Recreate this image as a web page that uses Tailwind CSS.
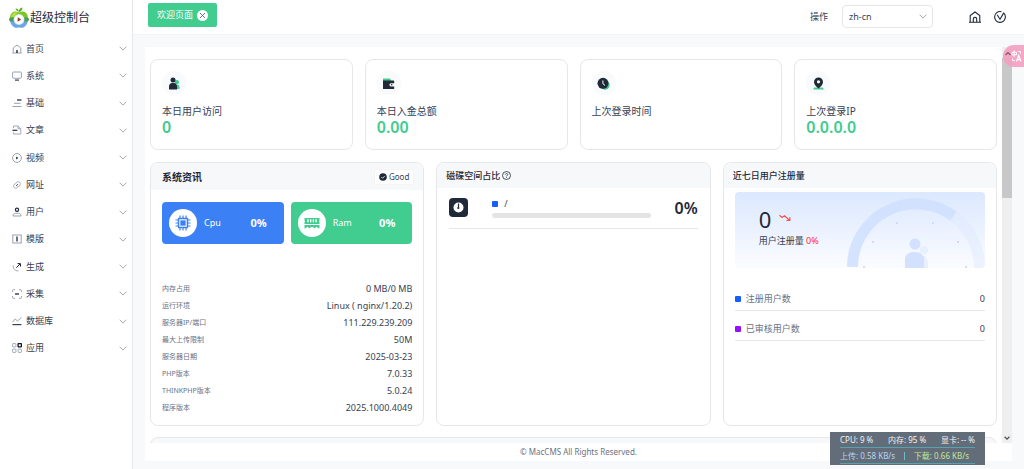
<!DOCTYPE html>
<html lang="zh-CN">
<head>
    <meta charset="UTF-8">
    <meta name="viewport" content="width=device-width, initial-scale=1.0">
    <title>超级控制台</title>
    <script src="https://cdn.jsdelivr.net/npm/@tailwindcss/browser@4"></script>
</head>
<body class="bg-[#f7f9fb] font-['Noto_Sans','Noto_Sans_CJK_SC',sans-serif] text-[9px] leading-[14px] text-gray-700 flex h-screen overflow-hidden">

    <!-- Chevron shared by the menu rows -->
    <svg class="hidden">
        <symbol id="chevron" viewBox="0 0 8 5"><path d="M.6.7 4 4.1 7.4.7" fill="none" stroke="currentColor" stroke-width=".9"/></symbol>
    </svg>

    <!-- Sidebar -->
    <aside class="w-[133px] shrink-0 bg-white border-r border-gray-200">
        <a href="#" class="flex items-center gap-px h-[35px] pl-[9px] text-[12px] leading-[18px] text-gray-800">
            <svg class="w-5 h-[21px]" viewBox="0 0 20 21">
                <path d="M10 5.500C5.500 3 1 5.500 1 11.500h18c0-6-4.500-8.500-9-6z" fill="#7cc722"/>
                <path d="M1 13c.3 4.500 3.500 7.800 6.500 7.800 1.300 0 1.700-.4 2.500-.4s1.200.4 2.500.4c3 0 6.200-3.300 6.500-7.800z" fill="#6ba6e4"/>
                <path d="M2 10C2.500 6.500 5 4.800 8.500 5.500L5 10z" fill="#b4e045"/>
                <path d="M10 5.200C9.500 2.500 11 .8 13.500.5 13.500 3 12 4.600 10 5.200zM10 4.700C8.500 4.400 6.500 3.200 6.600 1.500 8.500 1.600 9.800 3 10 4.700z" fill="#55b51f"/>
                <rect x="0" y="10.500" width="20" height="4" rx="2" fill="#4f9a62"/>
                <circle cx="10" cy="12.500" r="5.400" fill="#d6ebf2"/>
                <circle cx="10" cy="12.500" r="4.500" fill="#fff"/>
                <path d="M8.700 10.300v4.400l3.500-2.200z" fill="#8d3b33"/>
            </svg>
            超级控制台
        </a>
        <nav class="grid grid-rows-12 h-[327px] pl-3 pr-[5px] text-gray-700">
            <a href="#" class="flex items-center gap-1">
                <svg class="w-[10px] h-[10px] text-gray-400" viewBox="0 0 10 10" fill="none" stroke="currentColor"><path d="M1.200 9V4L5 1l3.800 3v5M.5 9h9"/><path d="M5 9V6" stroke="#1f2937" stroke-width="1.400"/></svg>
                <span class="flex-1">首页</span><svg class="w-2 h-[5px] text-gray-400"><use href="#chevron"/></svg>
            </a>
            <a href="#" class="flex items-center gap-1">
                <svg class="w-[10px] h-[10px] text-gray-400" viewBox="0 0 10 10" fill="none" stroke="currentColor"><rect x=".6" y="1" width="8.800" height="6.300" rx="1"/><path d="M3 9.100h4" stroke="#374151" stroke-width="1.200"/></svg>
                <span class="flex-1">系统</span><svg class="w-2 h-[5px] text-gray-400"><use href="#chevron"/></svg>
            </a>
            <a href="#" class="flex items-center gap-1">
                <svg class="w-[10px] h-[10px] text-gray-400" viewBox="0 0 10 10" fill="none" stroke="currentColor"><path d="M2 5.300h6.500M.5 8.500h9"/><path d="M5 2h4.500" stroke="#374151" stroke-width="1.400"/></svg>
                <span class="flex-1">基础</span><svg class="w-2 h-[5px] text-gray-400"><use href="#chevron"/></svg>
            </a>
            <a href="#" class="flex items-center gap-1">
                <svg class="w-[10px] h-[10px] text-gray-400" viewBox="0 0 10 10" fill="none" stroke="currentColor" stroke-width=".9"><path d="M1.500 3V1H6l2.800 2.700V9H1.500V7.300M6 1v2.700h2.800"/><path d="M.5 5.300h4.800" stroke="#1f2937" stroke-width="1.200"/></svg>
                <span class="flex-1">文章</span><svg class="w-2 h-[5px] text-gray-400"><use href="#chevron"/></svg>
            </a>
            <a href="#" class="flex items-center gap-1">
                <svg class="w-[10px] h-[10px] text-gray-400" viewBox="0 0 10 10" fill="none" stroke="currentColor"><circle cx="5" cy="5" r="4.400"/><path d="M4.200 3.600v2.800L6.400 5z" fill="#1f2937" stroke="none"/></svg>
                <span class="flex-1">视频</span><svg class="w-2 h-[5px] text-gray-400"><use href="#chevron"/></svg>
            </a>
            <a href="#" class="flex items-center gap-1">
                <svg class="w-[10px] h-[10px] text-gray-400" viewBox="0 0 10 10" fill="none" stroke="currentColor" stroke-width=".9"><path d="M4 3.200C4.500 1.800 6 1.300 7.200 2c1.400.8 1.500 2.600.5 3.700-.6.600-1.300.9-2 .8M6 6.500C5.600 8 4 8.700 2.700 8 1.400 7.200 1.300 5.400 2.300 4.300c.6-.5 1.200-.7 1.900-.6"/><path d="m4.200 5.900 1.600-1.700" stroke="#1f2937"/></svg>
                <span class="flex-1">网址</span><svg class="w-2 h-[5px] text-gray-400"><use href="#chevron"/></svg>
            </a>
            <a href="#" class="flex items-center gap-1">
                <svg class="w-[10px] h-[10px] text-gray-400" viewBox="0 0 10 10" fill="none" stroke="currentColor"><circle cx="5" cy="2.700" r="1.600" stroke="#1f2937" stroke-width="1.200"/><path d="M1 9c0-2 1.200-2.700 2.500-2.700h3C7.800 6.300 9 7 9 9z"/></svg>
                <span class="flex-1">用户</span><svg class="w-2 h-[5px] text-gray-400"><use href="#chevron"/></svg>
            </a>
            <a href="#" class="flex items-center gap-1">
                <svg class="w-[10px] h-[10px] text-gray-400" viewBox="0 0 10 10" fill="none" stroke="currentColor"><rect x=".8" y="1" width="8.400" height="8"/><path d="M5 2.500v5" stroke="#1f2937" stroke-width="1.300"/></svg>
                <span class="flex-1">模版</span><svg class="w-2 h-[5px] text-gray-400"><use href="#chevron"/></svg>
            </a>
            <a href="#" class="flex items-center gap-1">
                <svg class="w-[10px] h-[10px] text-gray-400" viewBox="0 0 10 10" fill="none" stroke="currentColor"><path d="M1.200 3.500C.8 6.800 3.200 9.200 6.500 8.800"/><path d="M4.300 5.700 8 2M5.500 1.600h3v3" stroke="#1f2937"/></svg>
                <span class="flex-1">生成</span><svg class="w-2 h-[5px] text-gray-400"><use href="#chevron"/></svg>
            </a>
            <a href="#" class="flex items-center gap-1">
                <svg class="w-[10px] h-[10px] text-gray-400" viewBox="0 0 10 10" fill="none" stroke="currentColor"><path d="M.6 3V1.500Q.6.700 1.500.7H3M7 .7h1.500q.9 0 .9.800V3M9.400 7v1.500q0 .8-.9.800H7M3 9.300H1.500q-.9 0-.9-.8V7"/><path d="M3 5h4" stroke="#1f2937" stroke-width="1.300"/></svg>
                <span class="flex-1">采集</span><svg class="w-2 h-[5px] text-gray-400"><use href="#chevron"/></svg>
            </a>
            <a href="#" class="flex items-center gap-1">
                <svg class="w-[10px] h-[10px] text-gray-400" viewBox="0 0 10 10" fill="none" stroke="currentColor"><path d="m.6 6 2.600-3 2.300 2L9.400 1.500"/><path d="M.5 8.600h9" stroke="#374151" stroke-width="1.200"/></svg>
                <span class="flex-1">数据库</span><svg class="w-2 h-[5px] text-gray-400"><use href="#chevron"/></svg>
            </a>
            <a href="#" class="flex items-center gap-1">
                <svg class="w-[10px] h-[10px] text-gray-400" viewBox="0 0 10 10" fill="none" stroke="currentColor" stroke-width=".9"><rect x=".6" y=".6" width="3.300" height="3.300" rx=".5"/><rect x=".6" y="6.100" width="3.300" height="3.300" rx=".5"/><rect x="6.100" y="6.100" width="3.300" height="3.300" rx=".5"/><rect x="6.100" y=".6" width="3.300" height="3.300" rx=".5" stroke="#111827" stroke-width="1.300"/></svg>
                <span class="flex-1">应用</span><svg class="w-2 h-[5px] text-gray-400"><use href="#chevron"/></svg>
            </a>
        </nav>
    </aside>

    <div class="flex-1 min-w-0 flex flex-col">
        <!-- Top bar -->
        <header class="flex items-start justify-between h-[35px] shrink-0 bg-white border-b border-gray-100 pl-[15px] pr-[18px]">
            <div class="flex items-center gap-1 h-6 mt-[3px] px-[9px] rounded-xs bg-[#41cc90] text-white">
                <span>欢迎页面</span>
                <button aria-label="关闭" class="w-[11px] h-[11px] rounded-full bg-white flex items-center justify-center">
                    <svg class="w-[7px] h-[7px]" viewBox="0 0 7 7"><path d="m1 1 5 5M6 1 1 6" stroke="#4b5563" stroke-width=".8"/></svg>
                </button>
            </div>
            <div class="flex items-center h-[23px] mt-[5px]">
                <label for="lang" class="mr-[14px]">操作</label>
                <div class="relative mr-9">
                    <select id="lang" class="appearance-none w-[91px] h-[23px] pl-[6px] border border-gray-200 rounded-sm bg-white">
                        <option>zh-cn</option>
                    </select>
                    <svg class="absolute right-[6px] top-[9px] w-2 h-[5px] text-gray-400 pointer-events-none"><use href="#chevron"/></svg>
                </div>
                <a href="#" aria-label="首页" class="mr-[13px]">
                    <svg class="w-3 h-3" viewBox="0 0 12 12" fill="none" stroke="#1f2937" stroke-width="1.100"><path d="M1.200 11V4.500L6 1l4.800 3.500V11M0 11.200h12M4.300 11V8c0-2.200 3.400-2.200 3.400 0v3"/></svg>
                </a>
                <button aria-label="版本">
                    <svg class="w-3 h-3" viewBox="0 0 12 12" fill="none" stroke="#1f2937" stroke-width="1.100"><path d="M7.500.8C4-.2.6 2.400.6 6c0 3 2.400 5.400 5.400 5.400s5.400-2.400 5.400-5.400c0-1.500-.6-2.800-1.500-3.800"/><path d="M3.200 3.800 6 8.300 9.900 1.600"/></svg>
                </button>
            </div>
        </header>

        <main class="flex-1 min-h-0 flex mt-3 mx-3">
            <div class="flex-1 min-w-0 bg-white pt-3 px-[5px] overflow-hidden">
                <!-- Stat cards -->
                <div class="grid grid-cols-4 gap-3">
                    <section class="h-[91px] border border-gray-200 rounded-lg p-[11px]">
                        <div class="w-6 h-6 rounded-full bg-gray-50 flex items-center justify-center">
                            <svg class="w-[13px] h-[13px]" viewBox="0 0 13 13"><g fill="#41cc90"><circle cx="8.800" cy="5.200" r="2.200"/><path d="M7 12V8.500C9 7 11.500 8 11.500 10v2z"/></g><g fill="#1f2937"><circle cx="5" cy="2.900" r="2.500"/><path d="M1 12.500V9.300C1 7.400 2.400 6 4.200 6h1.500C7.500 6 9 7.400 9 9.300v3.200z"/></g></svg>
                        </div>
                        <h2 class="mt-[9px] text-[10px]">本日用户访问</h2>
                        <p class="text-[16px] leading-[18px] font-semibold text-[#41cc90]">0</p>
                    </section>
                    <section class="h-[91px] border border-gray-200 rounded-lg p-[11px]">
                        <div class="w-6 h-6 rounded-full bg-gray-50 flex items-center justify-center">
                            <svg class="w-[13px] h-[13px]" viewBox="0 0 13 13"><path d="M1 1.500h7l1.500 3H1z" fill="#41cc90"/><path d="M1 3.500h10.500q.7 0 .7.700v2H9a1.500 1.500 0 0 0 0 3.200h3.200v2q0 .6-.7.600H1.700q-.7 0-.7-.6z" fill="#1f2937"/><circle cx="9.700" cy="7.800" r=".8" fill="#1f2937"/></svg>
                        </div>
                        <h2 class="mt-[9px] text-[10px]">本日入金总额</h2>
                        <p class="text-[16px] leading-[18px] font-semibold text-[#41cc90]">0.00</p>
                    </section>
                    <section class="h-[91px] border border-gray-200 rounded-lg p-[11px]">
                        <div class="w-6 h-6 rounded-full bg-gray-50 flex items-center justify-center">
                            <svg class="w-[13px] h-[13px]" viewBox="0 0 13 13"><circle cx="8" cy="8" r="4.700" fill="#41cc90"/><circle cx="6" cy="6.300" r="5.500" fill="#1f2937"/><path d="M5.900 3.500v3.200l2.100 1.700" fill="none" stroke="#fff"/></svg>
                        </div>
                        <h2 class="mt-[9px] text-[10px]">上次登录时间</h2>
                    </section>
                    <section class="h-[91px] border border-gray-200 rounded-lg p-[11px]">
                        <div class="w-6 h-6 rounded-full bg-gray-50 flex items-center justify-center">
                            <svg class="w-[13px] h-[13px]" viewBox="0 0 13 13"><path d="M2.300 10.500h8.400l1.300 2H1z" fill="#41cc90"/><path d="M6.500 11.500C3.500 9 2 7.200 2 5a4.500 4.500 0 0 1 9 0c0 2.200-1.500 4-4.500 6.500z" fill="#1f2937"/><circle cx="6.500" cy="4.800" r="1.600" fill="#fff"/></svg>
                        </div>
                        <h2 class="mt-[9px] text-[10px]">上次登录IP</h2>
                        <p class="text-[16px] leading-[18px] font-semibold text-[#41cc90]">0.0.0.0</p>
                    </section>
                </div>

                <div class="grid grid-cols-3 gap-3 mt-3">
                    <!-- System info -->
                    <section class="h-[264px] border border-gray-200 rounded-lg overflow-hidden">
                        <div class="flex items-center justify-between h-[27px] pl-[11px] pr-[9px] bg-[#f7f8fa]">
                            <h2 class="text-[10px] font-bold text-gray-800">系统资讯</h2>
                            <span class="flex items-center gap-[2px] h-4 px-1 text-[8px] bg-white border border-gray-100 rounded-xs">
                                <svg class="w-2 h-2" viewBox="0 0 8 8"><circle cx="4" cy="4" r="3.800" fill="#1f2937"/><path d="m2.300 4 1.300 1.300 2.200-2.400" fill="none" stroke="#fff" stroke-width=".8"/></svg>
                                Good
                            </span>
                        </div>
                        <div class="px-[11px] pt-3">
                            <div class="grid grid-cols-2 gap-[7px] text-white">
                                <div class="flex items-center h-[42px] pl-[7px] pr-[17px] rounded-sm bg-[#3c80f6]">
                                    <div class="w-7 h-7 rounded-full bg-white flex items-center justify-center">
                                        <svg class="w-4 h-4" viewBox="0 0 16 16" fill="none" stroke="#3c80f6"><path d="M5 .5v15M8 .5v15M11 .5v15M.5 5h15M.5 8h15M.5 11h15" stroke-width="1.200"/><rect x="2.800" y="2.800" width="10.400" height="10.400" rx="1" fill="#3c80f6" stroke="none"/><rect x="4.800" y="4.800" width="6.400" height="6.400" stroke="#fff" stroke-width="1.100"/></svg>
                                    </div>
                                    <span class="ml-[7px] flex-1">Cpu</span>
                                    <strong class="text-[11px]">0%</strong>
                                </div>
                                <div class="flex items-center h-[42px] pl-[7px] pr-[17px] rounded-sm bg-[#41cc90]">
                                    <div class="w-7 h-7 rounded-full bg-white flex items-center justify-center">
                                        <svg class="w-4 h-4" viewBox="0 0 16 16"><path d="M.5 3h15v2.500q-1.300.8 0 1.600V9H.5V7q1.300-.8 0-1.500zM.5 10h15v3.200h-2V12h-2v1.200h-2V12h-3v1.200h-2V12h-2v1.200h-2z" fill="#41cc90"/><path d="M4 4.200v3M6.700 4.200v3M9.400 4.200v3M12.100 4.200v3" stroke="#fff" stroke-width="1.400"/></svg>
                                    </div>
                                    <span class="ml-[7px] flex-1">Ram</span>
                                    <strong class="text-[11px]">0%</strong>
                                </div>
                            </div>
                            <dl class="mt-9 leading-[17px]">
                                <div class="flex justify-between"><dt class="text-[7px] text-gray-500">内存占用</dt><dd>0 MB/0 MB</dd></div>
                                <div class="flex justify-between"><dt class="text-[7px] text-gray-500">运行环境</dt><dd>Linux ( nginx/1.20.2)</dd></div>
                                <div class="flex justify-between"><dt class="text-[7px] text-gray-500">服务器IP/端口</dt><dd>111.229.239.209</dd></div>
                                <div class="flex justify-between"><dt class="text-[7px] text-gray-500">最大上传限制</dt><dd>50M</dd></div>
                                <div class="flex justify-between"><dt class="text-[7px] text-gray-500">服务器日期</dt><dd>2025-03-23</dd></div>
                                <div class="flex justify-between"><dt class="text-[7px] text-gray-500">PHP版本</dt><dd>7.0.33</dd></div>
                                <div class="flex justify-between"><dt class="text-[7px] text-gray-500">THINKPHP版本</dt><dd>5.0.24</dd></div>
                                <div class="flex justify-between"><dt class="text-[7px] text-gray-500">程序版本</dt><dd>2025.1000.4049</dd></div>
                            </dl>
                        </div>
                    </section>

                    <!-- Disk usage -->
                    <section class="h-[264px] border border-gray-200 rounded-lg overflow-hidden">
                        <div class="flex items-center gap-[2px] h-[25px] px-[9px] bg-[#f7f8fa]">
                            <h2 class="font-medium text-gray-800">磁碟空间占比</h2>
                            <svg class="w-[9px] h-[9px]" viewBox="0 0 9 9" fill="none" stroke="#1f2937" stroke-width=".8"><circle cx="4.500" cy="4.500" r="4"/><path d="M3.300 3.700c0-1.600 2.500-1.500 2.400 0C5.700 4.500 4.500 4.500 4.500 5.400M4.500 6.200v.8"/></svg>
                        </div>
                        <div class="mx-3 pt-[9px] pb-[10px] flex items-center border-b border-gray-200">
                            <div class="w-[19px] h-[19px] rounded-sm bg-gray-800 flex items-center justify-center">
                                <svg class="w-[11px] h-[11px]" viewBox="0 0 11 11"><circle cx="5.500" cy="5.500" r="5" fill="#fff"/><path d="M5.500 1.500v4" stroke="#1f2937" stroke-width="1.200"/><circle cx="5.300" cy="6" r="1.100" fill="#1f2937"/></svg>
                            </div>
                            <div class="flex-1 ml-6 mr-6">
                                <div class="flex items-center gap-[6px]"><i class="w-[6px] h-[6px] bg-blue-600 rounded-[1px]"></i>/</div>
                                <div class="h-[5px] mt-[2px] rounded-full bg-[#e4e4e4]"></div>
                            </div>
                            <strong class="text-[16px] leading-5 font-semibold text-gray-800">0%</strong>
                        </div>
                    </section>

                    <!-- Registrations of the last seven days -->
                    <section class="h-[264px] border border-gray-200 rounded-lg overflow-hidden">
                        <div class="flex items-center h-[25px] px-[9px] bg-[#f7f8fa]">
                            <h2 class="font-medium text-gray-800">近七日用户注册量</h2>
                        </div>
                        <div class="mx-[11px] mt-1">
                            <div class="flex justify-between h-[76px] pl-6 rounded-sm overflow-hidden bg-linear-to-b from-[#dbe8fe] to-[#fbfcff]">
                                <div class="pt-[13px]">
                                    <div class="flex items-start gap-2">
                                        <span class="text-[22px] leading-[29px] text-gray-800">0</span>
                                        <svg class="w-3 h-2 mt-[9px]" viewBox="0 0 12 8" fill="none" stroke="#f05252" stroke-width="1.200"><path d="M.5 1.200 3 3.500l2.500-1.800 5 4.600M7.500 6.500h3.300V3.300"/></svg>
                                    </div>
                                    <p>用户注册量 <span class="text-red-500">0%</span></p>
                                </div>
                                <svg class="w-[138px] h-[76px]" viewBox="0 0 138 76" fill="none">
                                    <path d="M5.500 76A63.500 63.500 0 0 1 106.500 25" transform="translate(0 -1)" stroke="#cfdffe" stroke-width="11" opacity=".85"/>
                                    <path d="M106.500 24A63.500 63.500 0 0 1 132.500 76" stroke="#dfe9fe" stroke-width="11" opacity=".5"/>
                                    <g fill="#c3d4fb"><circle cx="50" cy="31" r="1"/><circle cx="86" cy="31" r="1"/><circle cx="26" cy="50" r="1"/><circle cx="111" cy="50" r="1"/><circle cx="17" cy="75" r="1"/><circle cx="119" cy="75" r="1"/></g>
                                    <g fill="#e8effe"><circle cx="77" cy="58" r="4"/><path d="M66 76V69q0-6 7-6 8 0 8 9v4z"/></g>
                                    <g fill="#d3e1fe"><circle cx="68" cy="52" r="5.500"/><path d="M58 76v-8q0-8 9.500-8T77 68v8z"/></g>
                                </svg>
                            </div>
                            <div class="flex items-center mt-5 h-[23px] border-b border-gray-200">
                                <i class="w-[6px] h-[6px] mr-[5px] bg-blue-600 rounded-[1px]"></i><span class="flex-1 text-gray-500">注册用户数</span><span>0</span>
                            </div>
                            <div class="flex items-center mt-[7px] h-[23px] border-b border-gray-200">
                                <i class="w-[6px] h-[6px] mr-[5px] bg-purple-600 rounded-[1px]"></i><span class="flex-1 text-gray-500">已审核用户数</span><span>0</span>
                            </div>
                        </div>
                    </section>
                </div>

                <section class="h-40 mt-[11px] border border-gray-200 rounded-lg bg-[#f7f8fa]"></section>
            </div>

            <!-- Scroll track -->
            <div class="w-[10px] bg-[#efefef] flex flex-col justify-between items-center pt-[11px] pb-[2px]">
                <div class="w-full h-[140px] bg-[#c8c8c8]"></div>
                <svg class="w-[6px] h-[6px]" viewBox="0 0 6 6"><path d="m.6 1.800 2.400 2.400 2.400-2.400" fill="none" stroke="#4b5563" stroke-width="1.300"/></svg>
            </div>
        </main>

        <footer class="h-[18px] shrink-0 mx-3 mb-2 bg-white text-center text-[8px] leading-[18px] text-gray-500">© MacCMS All Rights Reserved.</footer>
    </div>

    <!-- Translate button -->
    <button aria-label="翻译" class="absolute right-0 top-[45px] w-[21px] h-[22px] rounded-l-full bg-[#f39fbf]/90 flex items-center justify-center">
        <svg class="w-[18px] h-3" viewBox="0 0 18 12" fill="none" stroke="#fff"><path d="M.5 5 3 2.500 5.500 5" stroke="#80566b" stroke-width="1.200"/><path d="M7 2.300h4.500v2.500H7zM9.200.5v6.300M13 1.500h2.500v2M7.500 8.500v2H10"/><path d="m11.500 11.500 2.200-6 2.300 6M12.300 9.700h2.900" stroke-width="1.200"/></svg>
    </button>

    <!-- Resource monitor -->
    <div class="absolute right-[39px] bottom-1 w-[155px] h-[33px] bg-[#626d79] text-[8px] text-gray-100 px-[10px]">
        <div class="flex justify-between h-4 items-center border-b border-[#56a3b0]"><span>CPU: 9 %</span><span>内存: 95 %</span><span>显卡: -- %</span></div>
        <div class="flex justify-between h-4 items-center border-b border-[#56a3b0] pr-[6px]"><span class="text-[#b9d3f0]">上传: 0.58 KB/s</span><i class="w-px h-2 bg-[#6dbcc4]"></i><span class="text-[#c3e59a]">下载: 0.66 KB/s</span></div>
    </div>
</body>
</html>
